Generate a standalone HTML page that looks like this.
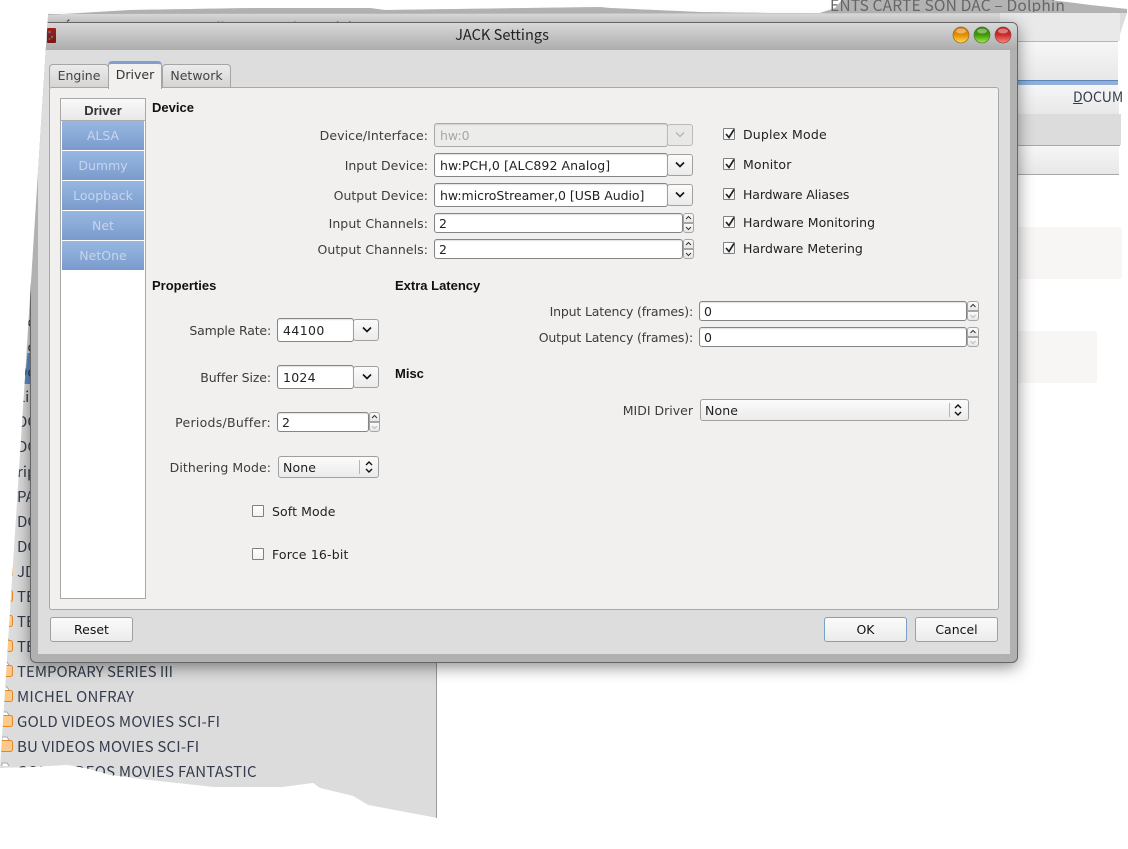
<!DOCTYPE html>
<html><head><meta charset="utf-8"><title>JACK Settings</title>
<style>
html,body{margin:0;padding:0;background:#fff}
#p{position:relative;width:1128px;height:849px;overflow:hidden;font-family:"DejaVu Sans","Liberation Sans",sans-serif;font-size:12.5px;color:#3c3c3c}
#p div,#p svg{position:absolute}
.t{line-height:20px;height:20px;white-space:nowrap;margin-top:1px}
.r{text-align:right}
.c{text-align:center}
.b{font-family:"Liberation Sans",sans-serif;font-weight:bold;color:#111;font-size:13px}
.v{color:#222}
.bg{font-family:"Noto Sans CJK JP","DejaVu Sans",sans-serif;font-size:15px;color:#333b4d;line-height:20px;height:20px;white-space:nowrap;margin-top:1px}
.f{background:#fff;border:1px solid #858585;border-radius:3px;box-sizing:border-box;box-shadow:inset 0 1px 1px rgba(0,0,0,.12)}
.btn{background:linear-gradient(#fbfbfb,#ebebeb);border:1px solid #a0a0a0;border-radius:3px;box-sizing:border-box}
.sp{box-sizing:border-box;border:1px solid #a5a5a5;border-radius:3px;background:linear-gradient(#fbfbfb,#e6e6e6)}
.tab{box-sizing:border-box;border:1px solid #a5a5a5;border-bottom:0;border-radius:4px 4px 0 0;background:linear-gradient(#ececec,#d4d3d1);text-align:center;line-height:22px;color:#444;font-size:12.5px}
.it{left:62px;width:82px;height:29px;background:linear-gradient(#98b8e2,#7a9bcc);color:#c6d5ec;text-align:center;line-height:29px;font-size:12.5px}
.cb{box-sizing:border-box;width:12px;height:12px;background:linear-gradient(#fff,#f2f2f2);border:1px solid #808080;border-radius:1px}
.cb svg{left:0;top:-1px}
</style></head><body><div id="p">

<svg style="left:0;top:0" width="1128" height="849" viewBox="0 0 1128 849">
<defs><linearGradient id="g1" x1="0" y1="0" x2="0" y2="1"><stop offset="0" stop-color="#f6f6f6"/><stop offset="1" stop-color="#e8e8e8"/></linearGradient></defs>
<polygon points="48,15 130,10 250,8 370,8 385,10 600,7 610,8 700,12 770,13 820,13 835,8 842,0 1050,0 1075,3 1090,5 1127,9 1127,13 1118,40 1118,176 1018,176 1018,300 437,300 437,818 400,811 368,805 353,796 320,788 313,783 283,787 213,787 140,779 110,775 85,768 67,765 33,767 0,768" fill="#dcdcdc"/>
<polygon points="48,15 130,10 250,8 370,8 385,10 600,7 610,8 700,12 770,13 820,13 835,8 842,0 1050,0 1075,3 1090,5 1127,9 1127,13 48,14" fill="#b3b3b3"/>
<rect x="1000" y="13" width="120" height="28" fill="#e9e9e9"/>
<rect x="1000" y="41" width="118" height="1" fill="#b5b5b5"/>
<rect x="1000" y="42" width="118" height="38" fill="url(#g1)"/>
<rect x="1000" y="80" width="118" height="1" fill="#5f85b8"/>
<rect x="1000" y="81" width="118" height="4" fill="#8fb0dc"/>
<rect x="1000" y="85" width="119" height="29" fill="url(#g1)"/>
<rect x="1000" y="114" width="121" height="31" fill="#dcdcdc"/>
<rect x="1000" y="145" width="120" height="1" fill="#a8a8a8"/>
<rect x="1000" y="146" width="119" height="28" fill="url(#g1)"/>
<rect x="1000" y="174" width="119" height="1" fill="#a8a8a8"/>
<rect x="1000" y="175" width="128" height="130" fill="#fff"/>
<rect x="1010" y="227" width="112" height="52" rx="3" fill="#f7f6f5"/>
<rect x="1010" y="331" width="87" height="52" rx="3" fill="#f7f6f5"/>
<rect x="436" y="300" width="1" height="518" fill="#9a9a9a"/>
<polygon points="27.5,353 32,353 32,384 24.5,384" fill="#5f90cc"/>
</svg>

<div style="left:0;top:0;width:1128px;height:12px;overflow:hidden"><div class="bg" style="left:830px;top:-6px;color:#666;font-size:15.6px;letter-spacing:.13px">ENTS CARTE SON DAC – Dolphin</div></div>
<div class="bg" style="left:1073px;top:86px;font-size:14px"><u>D</u>OCUM</div>

<div style="left:0;top:0;width:1128px;height:849px;clip-path:polygon(48px 15px,0 770px,0 849px,48px 849px,48px 15px)">
<div class="bg" style="left:17px;top:311px">Do</div>
<div class="bg" style="left:17px;top:336px">Do</div>
<div class="bg" style="left:17px;top:361px">Do</div>
<div class="bg" style="left:17px;top:386px">Li</div>
<div class="bg" style="left:17px;top:411px">DO</div>
<div class="bg" style="left:17px;top:436px">DO</div>
<div class="bg" style="left:17px;top:461px">rip</div>
<div class="bg" style="left:17px;top:486px">PA</div>
<div class="bg" style="left:17px;top:511px">DO</div>
<div class="bg" style="left:17px;top:536px">DO</div>
<div class="bg" style="left:17px;top:561px">JD</div>
<div class="bg" style="left:17px;top:586px">TE</div>
<div class="bg" style="left:17px;top:611px">TE</div>
<div class="bg" style="left:17px;top:636px">TE</div>
<svg style="left:0;top:560px" width="20" height="215" viewBox="0 0 20 215">
<g fill="#fbc98a" stroke="#e2882a" stroke-width="1">
<rect x="-2" y="5.500" width="14.500" height="11" rx="2"/><rect x="-2" y="30.500" width="14.500" height="11" rx="2"/><rect x="-2" y="55.500" width="14.500" height="11" rx="2"/><rect x="-2" y="80.500" width="14.500" height="11" rx="2"/><rect x="-2" y="105.500" width="14.500" height="11" rx="2"/><rect x="-2" y="130.500" width="14.500" height="11" rx="2"/><rect x="-2" y="155.500" width="14.500" height="11" rx="2"/><rect x="-2" y="180.500" width="14.500" height="11" rx="2"/>
</g>
<g fill="#fff" stroke="#999" stroke-width=".8">
<path d="M2 5V2H7L9 5"/><path d="M2 30V27H7L9 30"/><path d="M2 55V52H7L9 55"/><path d="M2 80V77H7L9 80"/><path d="M2 105V102H7L9 105"/><path d="M2 130V127H7L9 130"/><path d="M2 155V152H7L9 155"/><path d="M2 180V177H7L9 180"/><path d="M2 206V203H7L9 206"/>
</g>
</svg>
</div>

<div class="bg" style="left:17px;top:661px">TEMPORARY SERIES III</div>
<div class="bg" style="left:17px;top:686px;letter-spacing:.25px">MICHEL ONFRAY</div>
<div class="bg" style="left:17px;top:711px;letter-spacing:.25px">GOLD VIDEOS MOVIES SCI-FI</div>
<div class="bg" style="left:17px;top:736px;letter-spacing:.2px">BU VIDEOS MOVIES SCI-FI</div>
<div class="bg" style="left:17px;top:761px;letter-spacing:.25px">GOLD VIDEOS MOVIES FANTASTIC</div>
<div class="bg" style="left:63px;top:17px;font-size:14px">Éditer</div>
<div class="bg" style="left:130px;top:17px;font-size:14px">Affichage</div>
<div class="bg" style="left:208px;top:17px;font-size:14px">Aller</div>
<div class="bg" style="left:265px;top:17px;font-size:14px">Outils</div>
<div class="bg" style="left:318px;top:17px;font-size:14px">Préférences</div>
<div class="bg" style="left:415px;top:17px;font-size:14px">Aide</div>

<svg style="left:0;top:755px" width="440" height="70" viewBox="0 0 440 70"><polygon points="0,13 33,12 67,10 85,13 110,20 140,24 213,32 283,32 313,28 320,33 353,41 368,50 400,56 437,63 437,70 0,70" fill="#fff"/></svg>

<div style="left:0;top:0;width:1128px;height:849px;clip-path:polygon(48px 15px,0 770px,0 849px,1128px 849px,1128px 0,48px 0)">
<div style="left:30px;top:22px;width:988px;height:641px;box-sizing:border-box;border:1px solid #666;border-radius:6px;background:#b1b1b1;box-shadow:0 4px 16px rgba(0,0,0,.45)"></div>
<div style="left:31px;top:23px;width:986px;height:27px;border-radius:5px 5px 0 0;background:linear-gradient(#d8d8d8,#adadad)"></div>
<div style="left:38px;top:50px;width:972px;height:604px;background:#dddddd"></div>
<div style="left:47px;top:28px;width:9px;height:15px;background:linear-gradient(#a02018,#7a1510);border-radius:1px"></div>
<svg style="left:47px;top:28px" width="9" height="15"><circle cx="2.500" cy="4" r="1.300" fill="#5a6f9a"/><circle cx="5" cy="9" r="1.200" fill="#5a6f9a"/><circle cx="2.500" cy="11" r="1" fill="#5a6f9a"/></svg>
<div class="t c" style="left:402px;top:25px;width:200px;margin-top:0;color:#222;font-size:14.6px;font-family:'Noto Sans CJK JP','DejaVu Sans',sans-serif">JACK Settings</div>
<svg style="left:950px;top:24px" width="64" height="22" viewBox="0 0 64 22">
<defs>
<linearGradient id="o" x1="0" y1="0" x2="0" y2="1"><stop offset="0" stop-color="#d07000"/><stop offset=".5" stop-color="#e58f00"/><stop offset="1" stop-color="#ffdc50"/></linearGradient>
<linearGradient id="gr" x1="0" y1="0" x2="0" y2="1"><stop offset="0" stop-color="#2d7a00"/><stop offset=".5" stop-color="#3f9a08"/><stop offset="1" stop-color="#a8ea50"/></linearGradient>
<linearGradient id="rd" x1="0" y1="0" x2="0" y2="1"><stop offset="0" stop-color="#b01c1c"/><stop offset=".5" stop-color="#cc2c2c"/><stop offset="1" stop-color="#ff8a80"/></linearGradient>
</defs>
<circle cx="11" cy="11" r="8" fill="url(#o)" stroke="#8a6a3a" stroke-width=".7"/><ellipse cx="11" cy="7" rx="5" ry="2.500" fill="#fff" opacity=".4"/>
<circle cx="32" cy="11" r="8" fill="url(#gr)" stroke="#4a7a3a" stroke-width=".7"/><ellipse cx="32" cy="7" rx="5" ry="2.500" fill="#fff" opacity=".4"/>
<circle cx="53" cy="11" r="8" fill="url(#rd)" stroke="#8a4a4a" stroke-width=".7"/><ellipse cx="53" cy="7" rx="5" ry="2.500" fill="#fff" opacity=".4"/>
</svg>

<div class="tab" style="left:49px;top:64px;width:60px;height:24px">Engine</div>
<div class="tab" style="left:162px;top:64px;width:69px;height:24px">Network</div>
<div style="left:49px;top:87px;width:950px;height:523px;box-sizing:border-box;background:#f1f0ee;border:1px solid #a8a8a8;border-radius:3px"></div>
<div class="tab" style="left:108px;top:61px;width:54px;height:28px;background:#f1f0ee;border-top:3px solid #7fa0cf;line-height:21px;color:#333">Driver</div>

<div style="left:60px;top:98px;width:86px;height:501px;box-sizing:border-box;background:#fff;border:1px solid #a8a8a8"></div>
<div class="t c b" style="left:61px;top:99px;width:84px;height:21px;margin-top:0;line-height:23px;background:linear-gradient(#fafafa,#e8e8e8);color:#333;border-bottom:1px solid #aaa">Driver</div>
<div class="it" style="top:121px">ALSA</div>
<div class="it" style="top:151px">Dummy</div>
<div class="it" style="top:181px">Loopback</div>
<div class="it" style="top:211px">Net</div>
<div class="it" style="top:241px">NetOne</div>

<div class="t b" style="left:152px;top:97px">Device</div>
<div class="t b" style="left:152px;top:275px">Properties</div>
<div class="t b" style="left:395px;top:275px">Extra Latency</div>
<div class="t b" style="left:395px;top:363px">Misc</div>

<div class="t r" style="left:228px;top:125px;width:200px;letter-spacing:.07px">Device/Interface:</div>
<div class="t r" style="left:228px;top:155px;width:200px">Input Device:</div>
<div class="t r" style="left:228px;top:185px;width:200px">Output Device:</div>
<div class="t r" style="left:228px;top:213px;width:200px;letter-spacing:.07px">Input Channels:</div>
<div class="t r" style="left:228px;top:239px;width:200px;letter-spacing:.07px">Output Channels:</div>

<div class="f" style="left:434px;top:123px;width:234px;height:24px;background:#ececea;border-color:#aaa"></div>
<div class="t" style="left:440px;top:125px;color:#a8a8a8">hw:0</div>
<div class="btn" style="left:667px;top:124px;width:26px;height:22px;border-color:#bbb;background:#e8e8e6"></div>
<svg style="left:674px;top:131px" width="12" height="8"><polyline points="2,1.500 6,5.500 10,1.500" fill="none" stroke="#b5b5b5" stroke-width="1.300"/></svg>

<div class="f" style="left:434px;top:153px;width:234px;height:24px"></div>
<div class="t v" style="left:440px;top:155px;letter-spacing:.08px">hw:PCH,0 [ALC892 Analog]</div>
<div class="btn" style="left:667px;top:154px;width:26px;height:22px"></div>
<svg style="left:674px;top:161px" width="12" height="8"><polyline points="2,1.500 6,5.500 10,1.500" fill="none" stroke="#111" stroke-width="1.600"/></svg>

<div class="f" style="left:434px;top:183px;width:234px;height:24px"></div>
<div class="t v" style="left:440px;top:185px;letter-spacing:-.04px">hw:microStreamer,0 [USB Audio]</div>
<div class="btn" style="left:667px;top:184px;width:26px;height:22px"></div>
<svg style="left:674px;top:191px" width="12" height="8"><polyline points="2,1.500 6,5.500 10,1.500" fill="none" stroke="#111" stroke-width="1.600"/></svg>

<div class="f" style="left:434px;top:213px;width:249px;height:20px"></div>
<div class="t v" style="left:439px;top:213px">2</div>
<div class="sp" style="left:683px;top:213px;width:11px;height:10px;border-radius:3px 3px 0 0"></div><div class="sp" style="left:683px;top:223px;width:11px;height:10px;border-radius:0 0 3px 3px"></div>
<svg style="left:683px;top:213px" width="11" height="20"><polyline points="3,6 5.500,3.500 8,6" fill="none" stroke="#333"/><polyline points="3,14 5.500,16.500 8,14" fill="none" stroke="#333"/></svg>

<div class="f" style="left:434px;top:239px;width:249px;height:20px"></div>
<div class="t v" style="left:439px;top:239px">2</div>
<div class="sp" style="left:683px;top:239px;width:11px;height:10px;border-radius:3px 3px 0 0"></div><div class="sp" style="left:683px;top:249px;width:11px;height:10px;border-radius:0 0 3px 3px"></div>
<svg style="left:683px;top:239px" width="11" height="20"><polyline points="3,6 5.500,3.500 8,6" fill="none" stroke="#333"/><polyline points="3,14 5.500,16.500 8,14" fill="none" stroke="#333"/></svg>

<div class="cb" style="left:723px;top:128px"><svg width="12" height="12"><polyline points="2,6 5,9.500 10,1.500" fill="none" stroke="#222" stroke-width="1.700"/></svg></div>
<div class="t v" style="left:743px;top:124px;letter-spacing:.18px">Duplex Mode</div>
<div class="cb" style="left:723px;top:158px"><svg width="12" height="12"><polyline points="2,6 5,9.500 10,1.500" fill="none" stroke="#222" stroke-width="1.700"/></svg></div>
<div class="t v" style="left:743px;top:154px;letter-spacing:.14px">Monitor</div>
<div class="cb" style="left:723px;top:188px"><svg width="12" height="12"><polyline points="2,6 5,9.500 10,1.500" fill="none" stroke="#222" stroke-width="1.700"/></svg></div>
<div class="t v" style="left:743px;top:184px;letter-spacing:-.12px">Hardware Aliases</div>
<div class="cb" style="left:723px;top:216px"><svg width="12" height="12"><polyline points="2,6 5,9.500 10,1.500" fill="none" stroke="#222" stroke-width="1.700"/></svg></div>
<div class="t v" style="left:743px;top:212px;letter-spacing:.05px">Hardware Monitoring</div>
<div class="cb" style="left:723px;top:242px"><svg width="12" height="12"><polyline points="2,6 5,9.500 10,1.500" fill="none" stroke="#222" stroke-width="1.700"/></svg></div>
<div class="t v" style="left:743px;top:238px">Hardware Metering</div>

<div class="t r" style="left:71px;top:320px;width:200px;letter-spacing:-.17px">Sample Rate:</div>
<div class="f" style="left:277px;top:318px;width:77px;height:24px"></div>
<div class="t v" style="left:283px;top:320px;letter-spacing:.4px">44100</div>
<div class="btn" style="left:353px;top:319px;width:26px;height:22px"></div>
<svg style="left:361px;top:326px" width="12" height="8"><polyline points="2,1.500 6,5.500 10,1.500" fill="none" stroke="#111" stroke-width="1.600"/></svg>

<div class="t r" style="left:71px;top:367px;width:200px;letter-spacing:-.1px">Buffer Size:</div>
<div class="f" style="left:277px;top:365px;width:77px;height:24px"></div>
<div class="t v" style="left:283px;top:367px;letter-spacing:.25px">1024</div>
<div class="btn" style="left:353px;top:366px;width:26px;height:22px"></div>
<svg style="left:361px;top:373px" width="12" height="8"><polyline points="2,1.500 6,5.500 10,1.500" fill="none" stroke="#111" stroke-width="1.600"/></svg>

<div class="t r" style="left:71px;top:412px;width:200px;letter-spacing:.27px">Periods/Buffer:</div>
<div class="f" style="left:277px;top:412px;width:92px;height:20px"></div>
<div class="t v" style="left:282px;top:412px">2</div>
<div class="sp" style="left:369px;top:412px;width:11px;height:10px;border-radius:3px 3px 0 0"></div><div class="sp" style="left:369px;top:422px;width:11px;height:10px;border-radius:0 0 3px 3px"></div>
<svg style="left:369px;top:412px" width="11" height="20"><polyline points="3,6 5.500,3.500 8,6" fill="none" stroke="#333"/><polyline points="3,14 5.500,16.500 8,14" fill="none" stroke="#bbb"/></svg>

<div class="t r" style="left:71px;top:457px;width:200px;letter-spacing:.07px">Dithering Mode:</div>
<div class="btn" style="left:278px;top:456px;width:101px;height:22px"></div>
<div style="left:359px;top:460px;width:1px;height:14px;background:#b5b5b5"></div>
<div class="t v" style="left:283px;top:457px;letter-spacing:.1px">None</div>
<svg style="left:363px;top:460px" width="12" height="14"><polyline points="3,5 6,2 9,5" fill="none" stroke="#111" stroke-width="1.400"/><polyline points="3,9 6,12 9,9" fill="none" stroke="#111" stroke-width="1.400"/></svg>

<div class="cb" style="left:252px;top:505px"></div>
<div class="t v" style="left:272px;top:501px;letter-spacing:.1px">Soft Mode</div>
<div class="cb" style="left:252px;top:548px"></div>
<div class="t v" style="left:272px;top:544px;letter-spacing:.17px">Force 16-bit</div>

<div class="t r" style="left:493px;top:301px;width:200px;letter-spacing:-.17px">Input Latency (frames):</div>
<div class="f" style="left:699px;top:301px;width:268px;height:20px"></div>
<div class="t v" style="left:704px;top:301px">0</div>
<div class="sp" style="left:967px;top:301px;width:12px;height:10px;border-radius:3px 3px 0 0"></div><div class="sp" style="left:967px;top:311px;width:12px;height:10px;border-radius:0 0 3px 3px"></div>
<svg style="left:967px;top:301px" width="12" height="20"><polyline points="3.500,6 6,3.500 8.500,6" fill="none" stroke="#333"/><polyline points="3.500,14 6,16.500 8.500,14" fill="none" stroke="#bbb"/></svg>

<div class="t r" style="left:493px;top:327px;width:200px;letter-spacing:-.17px">Output Latency (frames):</div>
<div class="f" style="left:699px;top:327px;width:268px;height:20px"></div>
<div class="t v" style="left:704px;top:327px">0</div>
<div class="sp" style="left:967px;top:327px;width:12px;height:10px;border-radius:3px 3px 0 0"></div><div class="sp" style="left:967px;top:337px;width:12px;height:10px;border-radius:0 0 3px 3px"></div>
<svg style="left:967px;top:327px" width="12" height="20"><polyline points="3.500,6 6,3.500 8.500,6" fill="none" stroke="#333"/><polyline points="3.500,14 6,16.500 8.500,14" fill="none" stroke="#bbb"/></svg>

<div class="t r" style="left:493px;top:400px;width:200px">MIDI Driver</div>
<div class="btn" style="left:700px;top:399px;width:269px;height:22px"></div>
<div style="left:949px;top:403px;width:1px;height:14px;background:#b5b5b5"></div>
<div class="t v" style="left:705px;top:400px;letter-spacing:.1px">None</div>
<svg style="left:952px;top:403px" width="12" height="14"><polyline points="3,5 6,2 9,5" fill="none" stroke="#111" stroke-width="1.400"/><polyline points="3,9 6,12 9,9" fill="none" stroke="#111" stroke-width="1.400"/></svg>

<div class="btn c" style="left:50px;top:617px;width:83px;height:25px;line-height:23px;color:#111">Reset</div>
<div class="btn c" style="left:824px;top:617px;width:83px;height:25px;line-height:23px;color:#111;border-color:#7c9fc9">OK</div>
<div class="btn c" style="left:915px;top:617px;width:83px;height:25px;line-height:23px;color:#111">Cancel</div>
</div>
</div></body></html>
